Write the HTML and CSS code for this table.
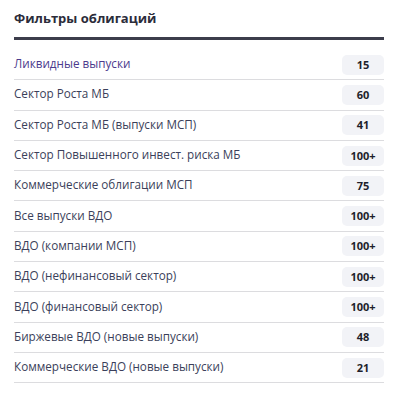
FILE: index.html
```html
<!DOCTYPE html>
<html lang="ru">
<head>
<meta charset="utf-8">
<link rel="stylesheet" href="styles.css">
</head>
<body>
<div class="panel">
  <h2 class="title">Фильтры облигаций</h2>
  <ul class="list">
    <li class="row active"><span class="name">Ликвидные выпуски</span><span class="badge">15</span></li>
    <li class="row"><span class="name">Сектор Роста МБ</span><span class="badge">60</span></li>
    <li class="row"><span class="name">Сектор Роста МБ (выпуски МСП)</span><span class="badge">41</span></li>
    <li class="row"><span class="name">Сектор Повышенного инвест. риска МБ</span><span class="badge">100+</span></li>
    <li class="row"><span class="name">Коммерческие облигации МСП</span><span class="badge">75</span></li>
    <li class="row"><span class="name">Все выпуски ВДО</span><span class="badge">100+</span></li>
    <li class="row"><span class="name">ВДО (компании МСП)</span><span class="badge">100+</span></li>
    <li class="row"><span class="name">ВДО (нефинансовый сектор)</span><span class="badge">100+</span></li>
    <li class="row"><span class="name">ВДО (финансовый сектор)</span><span class="badge">100+</span></li>
    <li class="row"><span class="name">Биржевые ВДО (новые выпуски)</span><span class="badge">48</span></li>
    <li class="row"><span class="name">Коммерческие ВДО (новые выпуски)</span><span class="badge">21</span></li>
  </ul>
</div>
</body>
</html>
```
FILE: styles.css
```css
html, body {
  margin: 0;
  padding: 0;
  background: #ffffff;
}
body {
  font-family: "Open Sans", "Noto Sans", sans-serif;
}
.panel {
  width: 370px;
  margin-left: 14px;
  padding-top: 9px;
}
.title {
  margin: 0;
  font-size: 13px;
  font-weight: 700;
  line-height: 18px;
  color: #2b2c3a;
  padding-bottom: 10px;
  border-bottom: 3px solid #3c3d4b;
}
.list {
  list-style: none;
  margin: 0;
  padding: 10px 0 0 0;
}
.row {
  display: flex;
  align-items: center;
  justify-content: space-between;
  height: 29.3px;
  border-bottom: 1px solid #dcdcdf;
}
.name {
  font-size: 11.7px;
  color: #3b3f5a;
  position: relative;
  top: -1.5px;
}
.row.active .name {
  color: #4b3a8c;
}
.badge {
  width: 42px;
  height: 20px;
  line-height: 20px;
  text-align: center;
  background: #f2f3f7;
  border-radius: 5px;
  font-size: 11px;
  font-weight: 700;
  color: #1e1f2b;
}
```
